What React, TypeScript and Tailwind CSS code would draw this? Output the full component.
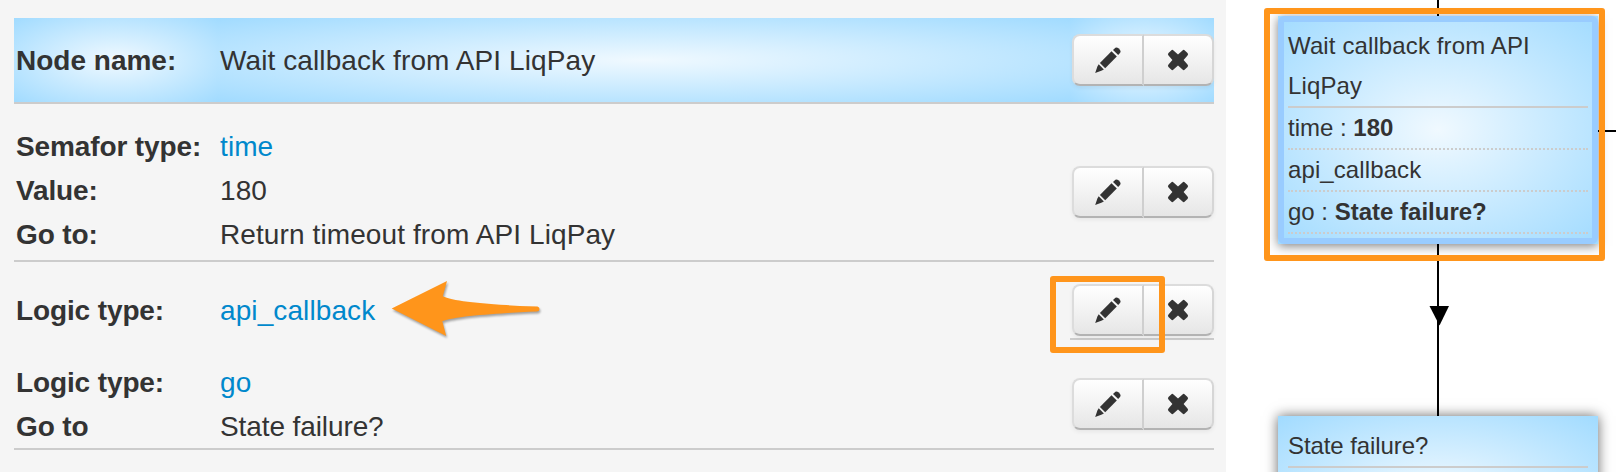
import type { ReactNode } from "react";

function PencilIcon() {
  return (
    <svg viewBox="0 0 28 28" className="block h-7 w-7 fill-[#333]">
      <path d="M19 3.900 21.400 1.800Q22.900 .800 24.400 2.200L25.900 3.700Q27.200 5.200 26.200 6.700L24.200 9.100Z" />
      <path d="M17.500 5.300 22.800 10.600 11.200 22.200 5.900 16.900Z" />
      <path d="M4.700 18.200 9.900 23.400 7.300 24.700 1.200 26.900 3.300 20.800Z" />
    </svg>
  );
}

function RemoveIcon() {
  return (
    <svg viewBox="0 0 28 28" className="block h-7 w-7 fill-[#333]">
      <path d="M7.200 4.400Q8.300 3.300 9.500 4.400L14 8.400 18.500 4.400Q19.700 3.300 20.800 4.400L23.500 7.100Q24.700 8.300 23.500 9.500L19.600 14 23.500 18.500Q24.700 19.700 23.500 20.900L20.800 23.600Q19.700 24.700 18.500 23.600L14 19.600 9.500 23.600Q8.300 24.700 7.200 23.600L4.500 20.900Q3.300 19.700 4.500 18.500L8.400 14 4.500 9.500Q3.300 8.300 4.500 7.100Z" />
    </svg>
  );
}

function Actions() {
  return (
    <div className="flex h-[52px] w-[142px] rounded-lg shadow-[0_2px_4px_rgba(0,0,0,0.06)]">
      <button className="flex w-[72px] items-center justify-center rounded-l-lg border-2 border-t-[#dcdcdc] border-r-[#cfcfcf] border-b-[#b3b3b3] border-l-[#dcdcdc] bg-linear-to-b from-white to-[#e6e6e6]">
        <PencilIcon />
      </button>
      <button className="flex w-[70px] items-center justify-center rounded-r-lg border-2 border-l-0 border-t-[#dcdcdc] border-r-[#d6d6d6] border-b-[#b3b3b3] bg-linear-to-b from-white to-[#e6e6e6]">
        <RemoveIcon />
      </button>
    </div>
  );
}

function Label({ children }: { children: ReactNode }) {
  return (
    <div className="w-[204px] shrink-0 pl-0.5 font-bold tracking-[-0.12px]">{children}</div>
  );
}

function Value({ children }: { children: ReactNode }) {
  return <div className="flex-1 pl-0.5 tracking-[0.1px]">{children}</div>;
}

function Link({ children }: { children: ReactNode }) {
  return <a className="text-[#0088cc]">{children}</a>;
}

function Arrow() {
  return (
    <svg
      viewBox="0 0 160 70"
      className="absolute top-[15px] left-[376px] h-[70px] w-[160px] fill-[#ff951b] drop-shadow-[1px_2px_1px_rgba(0,0,0,0.35)]"
    >
      <path d="M1.700 31.600 57 4 52.800 19.300C63 24.500 100 28 147.500 29.500Q149.500 30 149.500 32 149.500 34 147 34.600C110 36 65 39 52.300 44.200L56.200 59Z" />
    </svg>
  );
}

function NodePanel() {
  return (
    <section className="h-[472px] w-[1226px] shrink-0 bg-[#f5f5f5] pt-[18px] pl-3.5 text-[28px] leading-[44px]">
      <div className="w-[1200px]">
        <div className="flex h-[86px] border-b-2 border-[#ccc]">
          <div className="flex w-[204px] shrink-0 items-center bg-[radial-gradient(ellipse_farthest-corner_at_center,#f0f9ff_0%,#cbebff_47%,#a1dbff_100%)] pt-0.5 pl-0.5 font-bold">
            Node name:
          </div>
          <div className="flex w-[852px] items-center bg-[radial-gradient(ellipse_farthest-corner_at_center,#f0f9ff_0%,#cbebff_47%,#a1dbff_100%)] pt-0.5 pl-0.5 tracking-[0.1px]">
            Wait callback from API LiqPay
          </div>
          <div className="flex w-36 items-center justify-end bg-[radial-gradient(ellipse_farthest-corner_at_center,#f0f9ff_0%,#cbebff_47%,#a1dbff_100%)]">
            <Actions />
          </div>
        </div>

        <div className="flex h-[158px] border-b-2 border-[#ccc] pt-[21px]">
          <Label>
            <div>Semafor type:</div>
            <div>Value:</div>
            <div>Go to:</div>
          </Label>
          <Value>
            <div>
              <Link>time</Link>
            </div>
            <div>180</div>
            <div>Return timeout from API LiqPay</div>
          </Value>
          <div className="pt-[41px]">
            <Actions />
          </div>
        </div>

        <div className="relative flex h-[78px]">
          <div className="flex flex-1 pt-[27px]">
            <Label>Logic type:</Label>
            <Value>
              <Link>api_callback</Link>
            </Value>
          </div>
          <div className="flex w-36 justify-end border-b-2 border-[#ccc] pt-[22px]">
            <Actions />
          </div>
          <Arrow />
          <div className="absolute top-3.5 left-[1036px] h-[77px] w-[115px] rounded-[3px] border-6 border-[#ff951b]" />
        </div>

        <div className="flex h-[110px] border-b-2 border-[#ccc] pt-[21px]">
          <Label>
            <div>Logic type:</div>
            <div>Go to</div>
          </Label>
          <Value>
            <div>
              <Link>go</Link>
            </div>
            <div className="tracking-[-0.1px]">State failure?</div>
          </Value>
          <div className="pt-[17px]">
            <Actions />
          </div>
        </div>
      </div>
    </section>
  );
}

function Canvas() {
  return (
    <section className="relative h-[472px] flex-1 overflow-hidden bg-white text-[24px] leading-[40px]">
      <svg viewBox="0 0 390 472" className="absolute top-0 left-0 h-[472px] w-[390px]">
        <path d="M212 0V472M370 131H390" stroke="#000" strokeWidth="2" />
        <path d="M203.500 306H223L213.500 325.500Z" />
      </svg>

      <div className="absolute top-4 left-[52px] h-[228px] w-80 bg-[radial-gradient(ellipse_farthest-corner_at_center,#f0f9ff_0%,#cbebff_47%,#a1dbff_100%)] shadow-[0_2px_10px_rgba(0,0,0,0.5)]">
        <div className="h-full rounded-md border-6 border-[#99ccff] p-1">
          <div className="border-b-2 border-[#ccc] tracking-[0.12px]">
            Wait callback from API
            <br />
            LiqPay
          </div>
          <div className="border-b-2 border-dotted border-[#ccc]">
            time : <b>180</b>
          </div>
          <div className="border-b-2 border-dotted border-[#ccc] tracking-[0.1px]">
            api_callback
          </div>
          <div className="border-b-2 border-dotted border-[#ccc]">
            go : <b>State failure?</b>
          </div>
        </div>
      </div>

      <div className="absolute top-[416px] left-[52px] h-[150px] w-80 bg-[radial-gradient(ellipse_farthest-corner_at_center,#f0f9ff_0%,#cbebff_47%,#a1dbff_100%)] p-2.5 shadow-[0_0_12px_rgba(0,0,0,0.6)]">
        <div className="border-b-2 border-[#ccc] tracking-[-0.08px]">State failure?</div>
      </div>

      <div className="absolute top-2 left-[38px] h-[253px] w-[341px] rounded-[3px] border-6 border-[#ff951b]" />
    </section>
  );
}

export default function App() {
  return (
    <main className="flex h-[472px] w-[1616px] overflow-hidden font-['Liberation_Sans',Arial,sans-serif] text-[#333]">
      <NodePanel />
      <Canvas />
    </main>
  );
}
